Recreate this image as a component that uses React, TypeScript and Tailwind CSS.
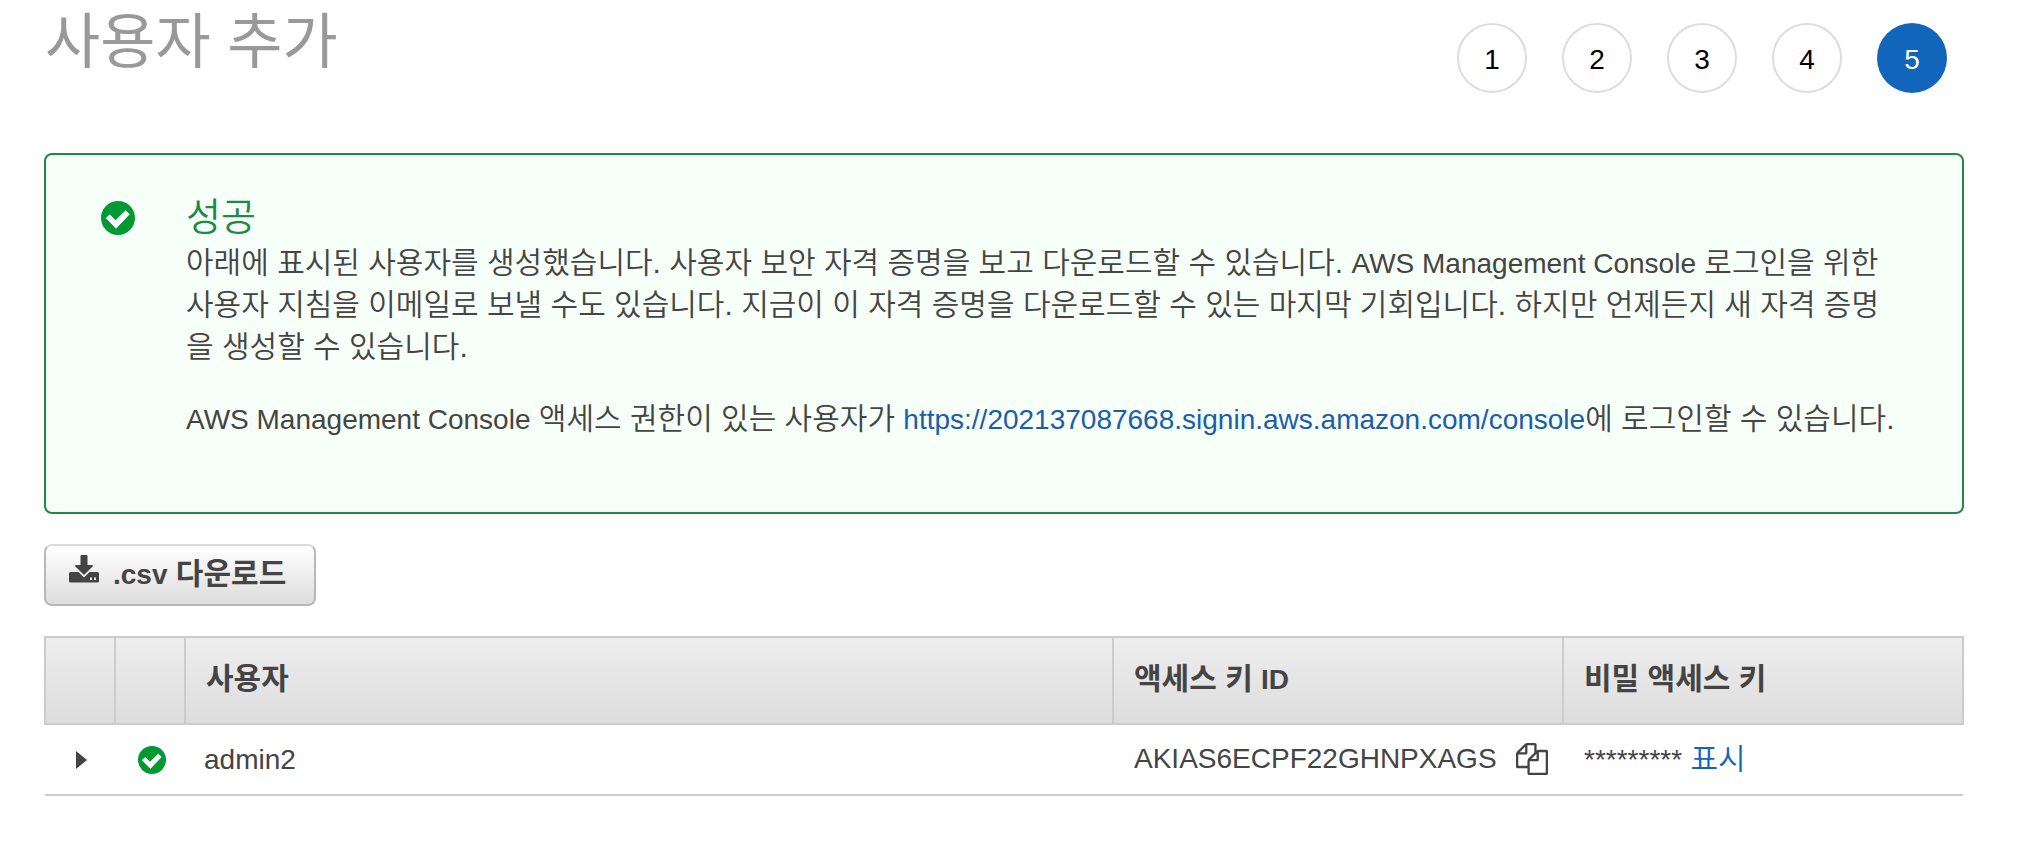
import React from "react";

const steps = [1, 2, 3, 4, 5];
const currentStep = 5;

function Latin({ children }: { children: React.ReactNode }) {
  return <span className="text-[28px] leading-none">{children}</span>;
}

function CheckCircle({ className }: { className: string }) {
  return (
    <svg viewBox="0 0 34 34" className={className} role="img" aria-label="성공">
      <circle cx="17" cy="17" r="17" fill="#009933" />
      <path d="M5.3 17.2 L8.6 13.9 L14.6 19.6 L24.6 9.9 L28.2 13.3 L15 27.2z" fill="#fff" stroke="#fff" strokeWidth="1" strokeLinejoin="round" />
    </svg>
  );
}

function DownloadIcon() {
  return (
    <svg viewBox="0 0 30 28" className="h-7 w-[30px]" fill="#444" aria-hidden="true">
      <path d="M12.5 0h5a1 1 0 0 1 1 1v9h4.5a.8.8 0 0 1 .6 1.4L15 20l-8.600-8.600a.8.8 0 0 1 .6-1.400h4.500V1a1 1 0 0 1 1-1z" />
      <path fillRule="evenodd" d="M1.500 17h8L15 22.500 20.500 17h8A1.500 1.500 0 0 1 30 18.500v7.500a1.500 1.500 0 0 1-1.500 1.500h-27A1.500 1.500 0 0 1 0 26v-7.500A1.500 1.500 0 0 1 1.500 17zM21 22.500v2.500h2v-2.500zM25 22.500v2.500h2v-2.500z" />
    </svg>
  );
}

function CopyIcon() {
  return (
    <svg viewBox="0 0 1792 1792" className="h-8 w-8" fill="#444" aria-hidden="true">
      <path d="M1696 384q40 0 68 28t28 68v1216q0 40-28 68t-68 28h-960q-40 0-68-28t-28-68v-288h-544q-40 0-68-28t-28-68v-672q0-40 20-88t48-76l408-408q28-28 76-48t88-20h416q40 0 68 28t28 68v328q68-40 128-40h416zm-544 213l-299 299h299v-299zm-640-384l-299 299h299v-299zm196 647l316-316v-416h-384v416q0 40-28 68t-68 28h-416v640h512v-256q0-40 20-88t48-76zm956 804v-1152h-384v416q0 40-28 68t-68 28h-416v640h896z" />
    </svg>
  );
}

export default function App() {
  return (
    <main className="min-h-screen bg-white pl-11 pr-[75px] font-['Liberation_Sans','Noto_Sans_CJK_KR',sans-serif] text-[30px] leading-[42px] text-[#444]">
      <header className="flex items-start justify-between pr-[17px] pl-px">
        <h1 className="text-[60px] leading-[86px] font-normal text-[#999]">사용자 추가</h1>
        <ol className="flex gap-[35px] pt-[23px]">
          {steps.map((step) => (
            <li
              key={step}
              aria-current={step === currentStep ? "step" : undefined}
              className={
                step === currentStep
                  ? "flex size-[70px] items-center justify-center rounded-full bg-[#1166bb] pt-1 text-[28px] text-white"
                  : "flex size-[70px] items-center justify-center rounded-full border-2 border-[#ddd] pt-1 text-[28px] text-black"
              }
            >
              {step}
            </li>
          ))}
        </ol>
      </header>

      <section className="mt-[60px] flex rounded-lg border-2 border-[#1d8a45] bg-[#f7fff9] pt-[38px] pr-[56px] pb-[72px] pl-[55px]">
        <CheckCircle className="mt-2 size-[34px] shrink-0" />
        <div className="ml-[51px] min-w-0 flex-1 font-[350]">
          <h2 className="text-[38px] leading-[49px] font-[350] text-[#1d8a45]">성공</h2>
          <p>
            아래에 표시된 사용자를 생성했습니다. 사용자 보안 자격 증명을 보고 다운로드할 수 있습니다. <Latin>AWS Management Console</Latin> 로그인을 위한 사용자 지침을 이메일로 보낼 수도 있습니다. 지금이 이 자격 증명을 다운로드할 수 있는 마지막 기회입니다. 하지만 언제든지 새 자격 증명을 생성할 수 있습니다.
          </p>
          <p className="mt-[30px]">
            <Latin>AWS Management Console</Latin> 액세스 권한이 있는 사용자가{" "}
            <a href="https://202137087668.signin.aws.amazon.com/console" className="text-[28px] leading-none text-[#1a5dab]">
              https://202137087668.signin.aws.amazon.com/console
            </a>
            에 로그인할 수 있습니다.
          </p>
        </div>
      </section>

      <button
        type="button"
        className="mt-[30px] flex h-[62px] items-start rounded-lg border-2 border-[#b8b8b8] border-t-[#ddd] bg-linear-to-b from-white to-[#ddd] pt-[7px] pr-7 pl-[23px] font-bold"
      >
        <span className="mt-0.5"><DownloadIcon /></span>
        <span className="ml-[14px]"><Latin>.csv</Latin> 다운로드</span>
      </button>

      <table className="mt-[30px] w-full table-fixed border-collapse text-left">
        <colgroup>
          <col className="w-[70px]" />
          <col className="w-[70px]" />
          <col />
          <col className="w-[450px]" />
          <col className="w-[400px]" />
        </colgroup>
        <thead>
          <tr className="h-[87px] bg-linear-to-b from-[#eee] to-[#ddd]">
            <th className="border-2 border-[#ccc]" aria-label="세부 정보" />
            <th className="border-2 border-[#ccc]" aria-label="상태" />
            <th className="border-2 border-[#ccc] px-5 pb-1 font-bold">사용자</th>
            <th className="border-2 border-[#ccc] px-5 pb-1 font-bold">액세스 키 <Latin>ID</Latin></th>
            <th className="border-2 border-[#ccc] px-5 pb-1 font-bold">비밀 액세스 키</th>
          </tr>
        </thead>
        <tbody>
          <tr className="h-[71px] border-b-2 border-[#ccc]">
            <td>
              <button type="button" aria-label="펼치기" className="ml-[31px] block">
                <svg viewBox="0 0 11 18" className="h-[18px] w-[11px]" fill="#444" aria-hidden="true">
                  <path d="M0 0 L11 9 L0 18z" />
                </svg>
              </button>
            </td>
            <td>
              <CheckCircle className="ml-[23px] size-7" />
            </td>
            <td className="px-[19px] pb-0.5"><Latin>admin2</Latin></td>
            <td className="px-[21px] pb-0.5">
              <div className="flex items-center gap-[19px]">
                <Latin>AKIAS6ECPF22GHNPXAGS</Latin>
                <button type="button" aria-label="복사"><CopyIcon /></button>
              </div>
            </td>
            <td className="px-[21px] pb-0.5 font-[350]">
              <Latin>*********</Latin> <a href="#show" className="text-[#1166bb]">표시</a>
            </td>
          </tr>
        </tbody>
      </table>
    </main>
  );
}
